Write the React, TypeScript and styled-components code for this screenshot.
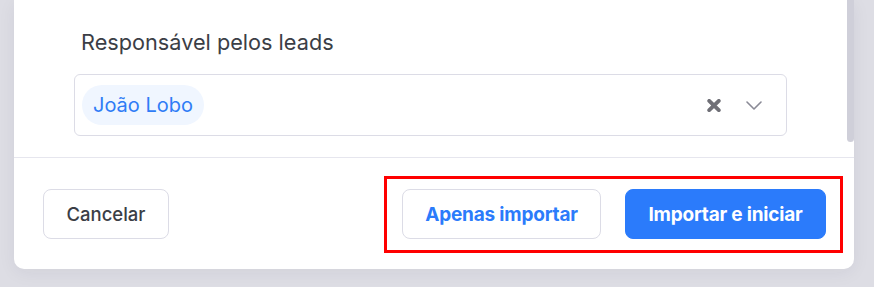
import React from 'react';
import styled, { createGlobalStyle } from 'styled-components';

const GlobalStyle = createGlobalStyle`
  html, body {
    margin: 0;
    padding: 0;
    background: #dddde4;
    font-family: Inter, "Noto Sans", sans-serif;
    -webkit-font-smoothing: antialiased;
  }
`;

function App() {
  return (
    <Page>
      <GlobalStyle />
      <Modal>
        <Body>
          <Content>
            <Label>Responsável pelos leads</Label>
            <Select>
              <Chip>João Lobo</Chip>
              <Icons>
                <svg width="14" height="13" viewBox="0 0 14 13">
                  <path d="M2.2 1.8 L11.8 11.2 M11.8 1.8 L2.2 11.2" stroke="#6f6f76" strokeWidth="3.8" strokeLinecap="round" />
                </svg>
                <svg width="16" height="9" viewBox="0 0 16 9">
                  <path d="M1 1 L8 8 L15 1" fill="none" stroke="#8a8a96" strokeWidth="1.6" strokeLinecap="round" strokeLinejoin="round" />
                </svg>
              </Icons>
            </Select>
          </Content>
          <ScrollThumb />
        </Body>
        <Footer>
          <Button>Cancelar</Button>
          <Highlight>
            <Button $variant='outline'>Apenas importar</Button>
            <Button $variant='primary'>Importar e iniciar</Button>
          </Highlight>
        </Footer>
      </Modal>
    </Page>
  );
}

export default App;

const Page = styled.div`
  padding: 0 20px 17px 14px;
`;

const Modal = styled.div`
  width: 840px;
  background: #fff;
  border-radius: 0 0 10px 10px;
  box-shadow: 0 4px 18px rgba(40, 40, 70, 0.06);
`;

const Body = styled.div`
  display: flex;
  align-items: flex-start;
  border-bottom: 1px solid #e6e6ee;
  height: 158px;
  box-sizing: border-box;
`;

const Content = styled.div`
  flex: 1;
  padding: 29px 60px 0 60px;
`;

const ScrollThumb = styled.div`
  width: 7px;
  height: 142px;
  background: #cfcfd9;
  border-radius: 0 0 4px 4px;
`;

const Label = styled.div`
  font-size: 21.7px;
  line-height: 26px;
  color: #3b3e46;
  padding-left: 7px;
  margin-bottom: 19px;
`;

const Select = styled.div`
  display: flex;
  align-items: center;
  justify-content: space-between;
  height: 62px;
  box-sizing: border-box;
  border: 1px solid #dcdce6;
  border-radius: 6px;
  padding: 0 24px 0 7px;
`;

const Chip = styled.span`
  display: inline-flex;
  align-items: center;
  height: 40px;
  padding: 0 11px;
  border-radius: 20px;
  background: #f0f6ff;
  color: #2f7cf6;
  font-size: 20px;
`;

const Icons = styled.div`
  display: flex;
  align-items: center;
  gap: 25px;
`;

const Footer = styled.div`
  display: flex;
  justify-content: space-between;
  align-items: center;
  padding: 31px 28px 30px 29px;
`;

const Highlight = styled.div`
  display: flex;
  gap: 24px;
  border: 3px solid #ff0000;
  padding: 10px 14px 11px 15px;
  margin: -13px -17px -14px 0;
`;

const Button = styled.button<{ $variant?: 'outline' | 'primary' }>`
  height: 50px;
  box-sizing: border-box;
  border-radius: 8px;
  font-family: Inter, "Noto Sans", sans-serif;
  font-size: ${({ $variant }) => ($variant ? '19px' : '18.5px')};
  cursor: pointer;
  border: 1px solid ${({ $variant }) => ($variant === 'primary' ? '#2b7bfb' : '#dcdce6')};
  background: ${({ $variant }) => ($variant === 'primary' ? '#2b7bfb' : '#fff')};
  color: ${({ $variant }) =>
    $variant === 'primary' ? '#fff' : $variant === 'outline' ? '#2b7bfb' : '#3b3e46'};
  font-weight: ${({ $variant }) => ($variant ? 700 : 500)};
  width: ${({ $variant }) => ($variant === 'primary' ? '201px' : $variant === 'outline' ? '199px' : '126px')};
  letter-spacing: ${({ $variant }) => ($variant ? '-0.2px' : '0')};
`;
